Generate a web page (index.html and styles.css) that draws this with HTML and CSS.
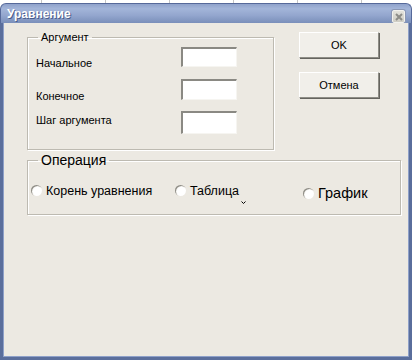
FILE: index.html
```html
<!DOCTYPE html>
<html>
<head>
    <meta charset="utf-8" />
    <title>Уравнение</title>
    <link rel="stylesheet" href="styles.css">
</head>
<body>
    <div class="desk"></div>
    <div class="window">
        <div class="titlebar">
            <span class="title">Уравнение</span>
            <span class="close">
                <svg width="10" height="10" viewBox="0 0 10 10">
                    <path d="M2 2 L8 8 M8 2 L2 8" stroke="#8d8d88" stroke-width="2" />
                </svg>
            </span>
        </div>
        <div class="client">
            <div class="top-row">
                <fieldset class="group arg">
                    <legend>Аргумент</legend>
                    <div class="arg-body">
                        <div class="labels">
                            <div class="lbl lbl1">Начальное</div>
                            <div class="lbl lbl2">Конечное</div>
                            <div class="lbl lbl3">Шаг аргумента</div>
                        </div>
                        <div class="inputs">
                            <input class="field f1" type="text" />
                            <input class="field f2" type="text" />
                            <input class="field f3" type="text" />
                        </div>
                    </div>
                </fieldset>
                <div class="buttons">
                    <button class="btn" type="button">OK</button>
                    <button class="btn" type="button">Отмена</button>
                </div>
            </div>
            <fieldset class="group oper">
                <legend>Операция</legend>
                <div class="radios">
                    <label class="opt"><span class="radio"></span>Корень уравнения</label>
                    <label class="opt"><span class="radio"></span>Таблица<svg class="tick" width="5" height="3" viewBox="0 0 5 3"><path d="M0.5 0.5 L2.5 2.5 L4.5 0.5" stroke="#000" stroke-width="1" fill="none" /></svg></label>
                    <label class="opt big"><span class="radio"></span>График</label>
                </div>
            </fieldset>
        </div>
    </div>
</body>
</html>
```

FILE: styles.css
```css
* {
    box-sizing: border-box;
}

body {
    margin: 0;
    width: 412px;
    height: 360px;
    overflow: hidden;
    font-family: 'Liberation Sans', Arial, sans-serif;
    font-size: 11px;
    color: #000;
    background: #fff;
}

.desk {
    height: 3px;
    background: repeating-linear-gradient(to right, #fff 0 41px, #c4c4c4 41px 42px, #fff 42px 64px);
}

.window {
    height: 357px;
    display: flex;
    flex-direction: column;
}

.titlebar {
    height: 20px;
    display: flex;
    align-items: center;
    justify-content: space-between;
    padding: 0 6px 0 6px;
    border-radius: 6px 6px 0 0;
    border: 1px solid #56699a;
    border-bottom: none;
    background: linear-gradient(#8fa2cb, #a3b5d9 25%, #93a6ce 60%, #7a8fba);
}

.title {
    color: #fff;
    font-weight: bold;
    font-size: 12px;
    text-shadow: 1px 1px 0 #4a5d8c;
    margin-top: 1px;
}

.close {
    width: 13px;
    height: 13px;
    margin-top: 6px;
    display: flex;
    align-items: center;
    justify-content: center;
    border: 1px solid #f2f2ee;
    border-radius: 2px;
    background: linear-gradient(#e4e3dc, #cfcdc4);
    box-shadow: 0 0 0 1px #8b97b4;
}

.client {
    flex: 1;
    background: #ece9e2;
    border: 3px solid #5a6e9c;
    border-top: none;
    box-shadow: inset 1px 0 #8ea0c8, inset -1px 0 #8ea0c8, inset 0 -1px #8ea0c8;
    padding: 8px 0 0 24px;
}

.top-row {
    display: flex;
    align-items: flex-start;
}

.group {
    margin: 0;
    padding: 0;
    border: 1px solid #bdbab1;
    box-shadow: 1px 1px 0 #fff, inset 1px 1px 0 #fff;
}

.group legend {
    margin-left: 10px;
    padding: 0 3px;
    line-height: 13px;
}

.arg {
    width: 247px;
    height: 119px;
}

.arg-body {
    display: flex;
    padding: 0 0 0 8px;
}

.labels {
    width: 145px;
}

.lbl {
    line-height: 13px;
}

.lbl1 {
    margin-top: 13px;
}

.lbl2 {
    margin-top: 20px;
}

.lbl3 {
    margin-top: 11px;
}

.inputs {
    display: flex;
    flex-direction: column;
    padding-top: 3px;
}

.field {
    width: 56px;
    margin: 0;
    padding: 0;
    background: #fff;
    border-top: 2px solid #8a8983;
    border-left: 2px solid #8a8983;
    border-right: 1px solid #f6f5f1;
    border-bottom: 1px solid #f6f5f1;
    outline: none;
}

.f1 {
    height: 20px;
}

.f2 {
    height: 21px;
    margin-top: 12px;
}

.f3 {
    height: 23px;
    margin-top: 11px;
}

.buttons {
    display: flex;
    flex-direction: column;
    gap: 14px;
    margin-left: 25px;
    margin-top: 1px;
}

.btn {
    width: 80px;
    height: 26px;
    margin: 0;
    padding: 0;
    font-family: 'Liberation Sans', Arial, sans-serif;
    font-size: 11px;
    color: #000;
    background: #f1efea;
    border-top: 1px solid #fff;
    border-left: 1px solid #fff;
    border-right: 1px solid #8e8d86;
    border-bottom: 1px solid #8e8d86;
    box-shadow: 1px 1px 0 #65645f;
}

.oper {
    width: 374px;
    height: 63px;
    margin-top: 2px;
}

.oper legend {
    font-size: 14px;
    line-height: 16px;
    margin-left: 10px;
}

.radios {
    display: grid;
    grid-template-columns: 144px 128px auto;
    align-items: center;
    padding: 13px 0 0 3px;
}

.opt {
    display: flex;
    align-items: center;
    gap: 4px;
    font-size: 12.5px;
    line-height: 14px;
}

.opt.big {
    font-size: 14.5px;
    margin-top: 5px;
}

.radio {
    width: 11px;
    height: 11px;
    flex: none;
    border-radius: 50%;
    background: radial-gradient(circle at 60% 60%, #fff 0 45%, #e8e6df 70%, #a4a29b 100%);
    box-shadow: inset 1px 1px 0 #8f8d86;
}

.tick {
    align-self: flex-end;
    margin: 0 0 -6px -2px;
}
```
